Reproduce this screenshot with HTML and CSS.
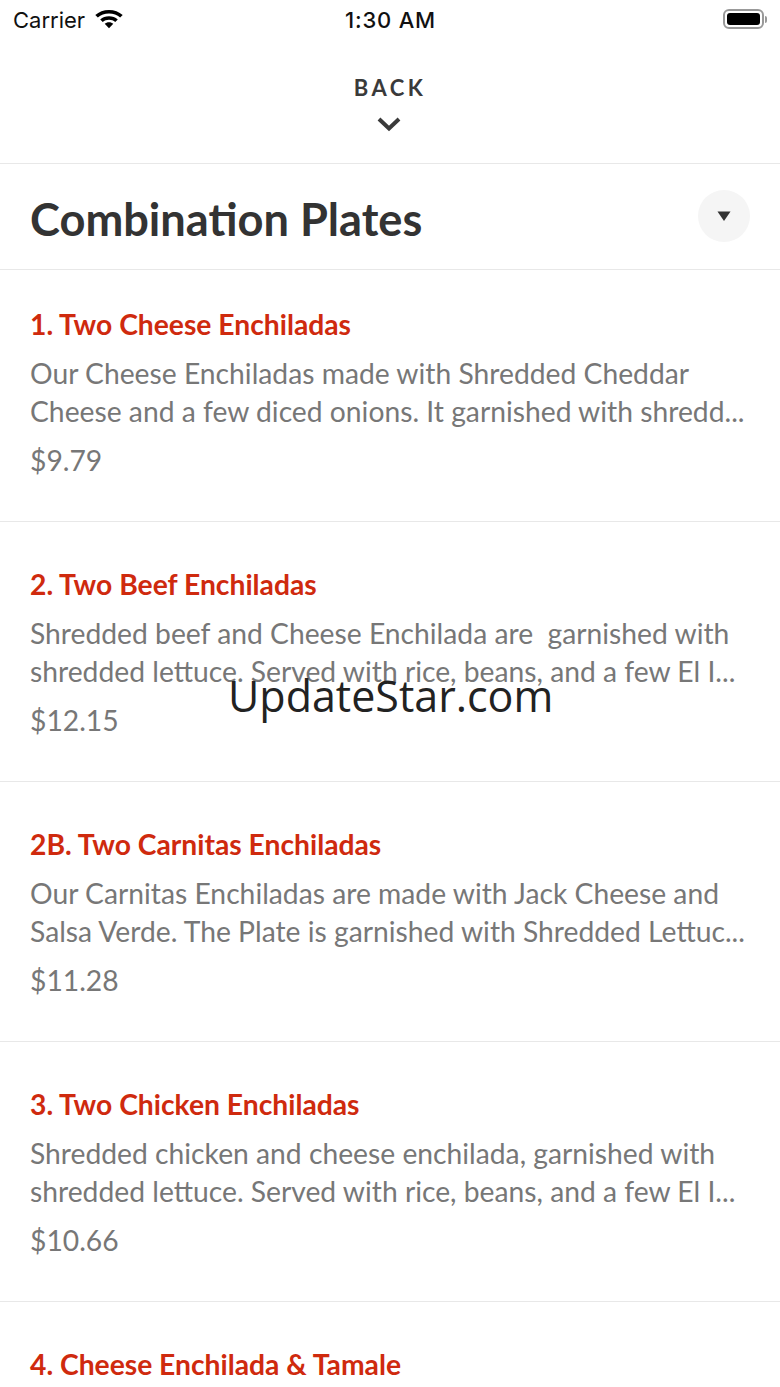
FILE: index.html
```html
<!DOCTYPE html>
<html lang="en">
<head>
<meta charset="utf-8">
<title>Combination Plates</title>
<link rel="stylesheet" href="styles.css">
</head>
<body>
<div class="page">
  <div class="status">
    <div class="status-left">
      <span class="carrier">Carrier</span>
      <svg class="wifi" width="30" height="20" viewBox="0 0 28 20" preserveAspectRatio="none"><path d="M14 1c5 0 9.400 1.900 12.800 5l-2.400 2.600C21.600 6 18 4.500 14 4.500S6.400 6 3.600 8.600L1.200 6C4.600 2.900 9 1 14 1z"/><path d="M14 7.200c3.200 0 6 1.200 8.200 3.200l-2.400 2.600c-1.500-1.400-3.500-2.300-5.800-2.300s-4.300.9-5.800 2.300l-2.400-2.600C8 8.400 10.800 7.200 14 7.200z"/><path d="M14 13.300c1.600 0 3 .6 4 1.500L14 19.200l-4-4.400c1-.9 2.400-1.500 4-1.500z"/></svg>
    </div>
    <span class="clock">1:30 AM</span>
    <div class="battery"><div class="battery-body"><div class="battery-fill"></div></div><div class="battery-cap"></div></div>
  </div>
  <div class="back">
    <span class="back-label">BACK</span>
    <svg class="back-chevron" width="26" height="16" viewBox="0 0 26 16"><path d="M3 3l10 9.500L23 3" fill="none" stroke="#3a3a3a" stroke-width="4"/></svg>
  </div>
  <div class="section">
    <h1 class="section-title">Combination Plates</h1>
    <div class="toggle"><svg width="14" height="10" viewBox="0 0 14 10"><path d="M0.500 0.500h13L7 10z" fill="#333"/></svg></div>
  </div>
  <div class="item item-first">
    <h2 class="item-title">1. Two Cheese Enchiladas</h2>
    <p class="item-desc">Our Cheese Enchiladas made with Shredded Cheddar<br>Cheese and a few diced onions. It garnished with shredd...</p>
    <p class="item-price">$9.79</p>
  </div>
  <div class="item">
    <h2 class="item-title">2. Two Beef Enchiladas</h2>
    <p class="item-desc">Shredded beef and Cheese Enchilada are&nbsp; garnished with<br>shredded lettuce. Served with rice, beans, and a few El I...</p>
    <p class="item-price">$12.15</p>
  </div>
  <div class="item">
    <h2 class="item-title">2B. Two Carnitas Enchiladas</h2>
    <p class="item-desc">Our Carnitas Enchiladas are made with Jack Cheese and<br>Salsa Verde. The Plate is garnished with Shredded Lettuc...</p>
    <p class="item-price">$11.28</p>
  </div>
  <div class="item">
    <h2 class="item-title">3. Two Chicken Enchiladas</h2>
    <p class="item-desc">Shredded chicken and cheese enchilada, garnished with<br>shredded lettuce. Served with rice, beans, and a few El I...</p>
    <p class="item-price">$10.66</p>
  </div>
  <div class="item">
    <h2 class="item-title">4. Cheese Enchilada &amp; Tamale</h2>
  </div>
  <div class="watermark">UpdateStar.com</div>
</div>
</body>
</html>
```
FILE: styles.css
```css
html, body { margin: 0; padding: 0; background: #fff; }
.page {
  position: relative;
  width: 780px;
  height: 1387px;
  overflow: hidden;
  font-family: Lato, sans-serif;
  color: #333;
}
.status {
  height: 40px;
  display: flex;
  align-items: center;
  justify-content: space-between;
  padding: 0 13px;
  position: relative;
}
.status-left { display: flex; align-items: center; gap: 9px; }
.carrier, .clock { font-family: Inter, "Liberation Sans", sans-serif; color: #111; }
.carrier { font-size: 22px; }
.clock { font-size: 22px; font-weight: 500; letter-spacing: 0.8px; position: absolute; left: 345px; top: 7px; }
.wifi { fill: #000; margin-top: -3px; }
.battery { display: flex; align-items: center; gap: 1px; margin-top: -2px; }
.battery-body { width: 41px; height: 20px; border: 2px solid #999; border-radius: 6px; box-sizing: border-box; padding: 2px; }
.battery-fill { width: 100%; height: 100%; background: #000; border-radius: 3px; }
.battery-cap { width: 2px; height: 7px; background: #999; border-radius: 0 2px 2px 0; }
.back {
  height: 123px;
  display: flex;
  flex-direction: column;
  align-items: center;
  border-bottom: 1px solid #e8e8e8;
}
.back-label { font-size: 22px; font-weight: 700; letter-spacing: 3.500px; color: #3a3a3a; margin-top: 34px; line-height: 27px; }
.back-chevron { margin-top: 15px; margin-left: -2px; }
.section {
  height: 105px;
  display: flex;
  align-items: center;
  justify-content: space-between;
  padding: 0 30px;
  border-bottom: 1px solid #e8e8e8;
}
.section-title { margin: 4px 0 0; font-size: 45.200px; font-weight: 700; color: #333; line-height: 1; }
.toggle {
  width: 52px; height: 52px; border-radius: 50%; background: #f5f5f5;
  margin-bottom: 2px;
  display: flex; align-items: center; justify-content: center;
}
.item {
  height: 259px;
  border-bottom: 1px solid #e8e8e8;
  padding: 0 30px;
}
.item-title { margin: 0; padding-top: 45px; font-size: 28.250px; line-height: 34px; font-weight: 700; color: #cf2a0e; }
.item-desc { margin: 13px 0 0; font-size: 28.250px; line-height: 38px; color: #777; white-space: nowrap; }
.item-price { margin: 11px 0 0; font-size: 28.250px; line-height: 38px; color: #777; }
.item-first { height: 251px; }
.item-first .item-title { padding-top: 37px; }
.watermark {
  position: absolute;
  left: 228px;
  top: 666px;
  font-family: "Open Sans", sans-serif;
  font-size: 43px;
  line-height: 60px;
  color: #222;
}
```
